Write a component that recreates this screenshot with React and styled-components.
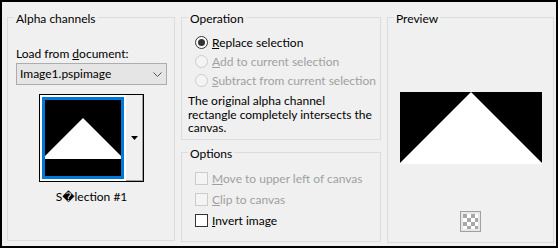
import React from "react";
import styled, { createGlobalStyle } from "styled-components";

const GlobalStyle = createGlobalStyle`
  html, body { margin: 0; padding: 0; background: #fff; }
  body {
    font-family: Lato, "DejaVu Sans", sans-serif;
    font-size: 12px;
    color: #000;
  }
`;

const Frame = styled.div`
  width: 558px;
  height: 248px;
  box-sizing: border-box;
  border: 2px solid #000;
  background: #f0f0f0;
  display: flex;
  align-items: flex-start;
  gap: 6px;
  padding: 15px 2px 0 5px;
`;

const Group = styled.div`
  position: relative;
  box-sizing: border-box;
  border: 1px solid #dcdcdc;
  width: ${(p) => p.$w}px;
  height: ${(p) => p.$h}px;
  padding: ${(p) => p.$pad || "0"};
  display: flex;
  flex-direction: column;
`;

const Title = styled.span`
  position: absolute;
  top: -7px;
  left: 6px;
  padding: 0 2px;
  line-height: 16px;
  background: #f0f0f0;
  white-space: nowrap;
`;

const Column = styled.div`
  display: flex;
  flex-direction: column;
  gap: 12px;
`;

const Label = styled.div`
  line-height: 16px;
  white-space: nowrap;
`;

const Combo = styled.div`
  margin-top: 1px;
  height: 22px;
  box-sizing: border-box;
  border: 1px solid #adadad;
  background: #e5e5e5;
  display: flex;
  align-items: center;
  justify-content: space-between;
  padding: 0 4px 0 3px;
  line-height: 20px;
`;

const ThumbFrame = styled.div`
  align-self: center;
  margin-top: 9px;
  display: flex;
  border: 1px solid #000;
  background: #fff;
`;

const ThumbTile = styled.div`
  padding: 2px;
  display: flex;
`;

const ThumbSel = styled.div`
  border: 3px solid #0078d7;
  width: 76px;
  height: 76px;
  display: flex;
`;

const ThumbButton = styled.div`
  width: 17px;
  box-sizing: border-box;
  background: #f0f0f0;
  border-right: 1px solid #a0a0a0;
  border-bottom: 1px solid #a0a0a0;
  display: flex;
  align-items: center;
  justify-content: center;
`;

const Caption = styled.div`
  margin-top: 7px;
  text-align: center;
  line-height: 16px;
`;

const OptionList = styled.div`
  display: flex;
  flex-direction: column;
  padding-left: 7px;
`;

const Row = styled.div`
  height: ${(p) => p.$h}px;
  display: flex;
  align-items: center;
  gap: 4px;
  color: ${(p) => (p.$disabled ? "#a0a0a0" : "#000")};
  white-space: nowrap;
  line-height: ${(p) => p.$h}px;
`;

const Radio = styled.span`
  width: 13px;
  height: 13px;
  box-sizing: border-box;
  border-radius: 50%;
  border: 1px solid ${(p) => (p.$disabled ? "#cccccc" : "#333")};
  background: ${(p) => (p.$disabled ? "#f4f4f4" : "#fff")};
  display: flex;
  align-items: center;
  justify-content: center;
  flex: none;
  &::after {
    content: "";
    display: ${(p) => (p.$checked ? "block" : "none")};
    width: 7px;
    height: 7px;
    border-radius: 50%;
    background: #333;
  }
`;

const Check = styled.span`
  width: 13px;
  height: 13px;
  box-sizing: border-box;
  border: 1px solid ${(p) => (p.$disabled ? "#cccccc" : "#333")};
  background: ${(p) => (p.$disabled ? "#f4f4f4" : "#fff")};
  flex: none;
`;

const Description = styled.p`
  margin: 4px 0 0;
  line-height: 13.5px;
  white-space: nowrap;
`;

const PreviewImage = styled.svg`
  align-self: center;
  display: block;
`;

const CheckerIcon = styled.svg`
  align-self: center;
  margin-top: 47px;
  display: block;
`;

function Chevron() {
  return (
    <svg width="9" height="5" viewBox="0 0 9 5">
      <polyline points="0.5,0.5 4.5,4.5 8.5,0.5" fill="none" stroke="#555" strokeWidth="1" />
    </svg>
  );
}

export default function App() {
  return (
    <>
      <GlobalStyle />
      <Frame>
        <Group $w={168} $h={224} $pad="28px 7px 0 8px">
          <Title>Alpha channels</Title>
          <Label>
            Load from <u>d</u>ocument:
          </Label>
          <Combo>
            <span>Image1.pspimage</span>
            <Chevron />
          </Combo>
          <ThumbFrame>
            <ThumbTile>
              <ThumbSel>
                <svg width="76" height="76" viewBox="0 0 76 76">
                  <rect width="76" height="76" fill="#000" />
                  <polygon points="38,18 76,56 76,59 0,59 0,56" fill="#fff" />
                </svg>
              </ThumbSel>
            </ThumbTile>
            <ThumbButton>
              <svg width="7" height="4" viewBox="0 0 7 4">
                <polygon points="0,0 7,0 3.5,4" fill="#000" />
              </svg>
            </ThumbButton>
          </ThumbFrame>
          <Caption>S{"\uFFFD"}lection #1</Caption>
        </Group>

        <Column>
          <Group $w={200} $h={123} $pad="15px 6px 0 6px">
            <Title>Operation</Title>
            <OptionList>
              <Row $h={19}>
                <Radio $checked />
                <span>
                  <u>R</u>eplace selection
                </span>
              </Row>
              <Row $h={19} $disabled>
                <Radio $disabled />
                <span>
                  <u>A</u>dd to current selection
                </span>
              </Row>
              <Row $h={19} $disabled>
                <Radio $disabled />
                <span>
                  <u>S</u>ubtract from current selection
                </span>
              </Row>
            </OptionList>
            <Description>
              The original alpha channel
              <br />
              rectangle completely intersects the
              <br />
              canvas.
            </Description>
          </Group>
          <Group $w={200} $h={90} $pad="15px 6px 0 6px">
            <Title>Options</Title>
            <OptionList>
              <Row $h={21} $disabled>
                <Check $disabled />
                <span>
                  <u>M</u>ove to upper left of canvas
                </span>
              </Row>
              <Row $h={21} $disabled>
                <Check $disabled />
                <span>
                  <u>C</u>lip to canvas
                </span>
              </Row>
              <Row $h={21}>
                <Check />
                <span>
                  <u>I</u>nvert image
                </span>
              </Row>
            </OptionList>
          </Group>
        </Column>

        <Group $w={167} $h={226} $pad="74px 0 0 0">
          <Title>Preview</Title>
          <PreviewImage width="142" height="72" viewBox="0 0 142 72">
            <rect width="142" height="72" fill="#000" />
            <polygon points="71,0 142,71 142,72 0,72 0,71" fill="#fff" />
          </PreviewImage>
          <CheckerIcon width="21" height="21" viewBox="0 0 21 21">
            <defs>
              <pattern id="chk" x="3" y="3" width="8" height="8" patternUnits="userSpaceOnUse">
                <rect width="8" height="8" fill="#fff" />
                <rect width="4" height="4" fill="#a8a8a8" />
                <rect x="4" y="4" width="4" height="4" fill="#a8a8a8" />
              </pattern>
            </defs>
            <rect x="0.5" y="0.5" width="20" height="20" fill="#e8e8e8" stroke="#a0a0a0" />
            <rect x="3" y="3" width="15" height="15" fill="url(#chk)" />
          </CheckerIcon>
        </Group>
      </Frame>
    </>
  );
}
